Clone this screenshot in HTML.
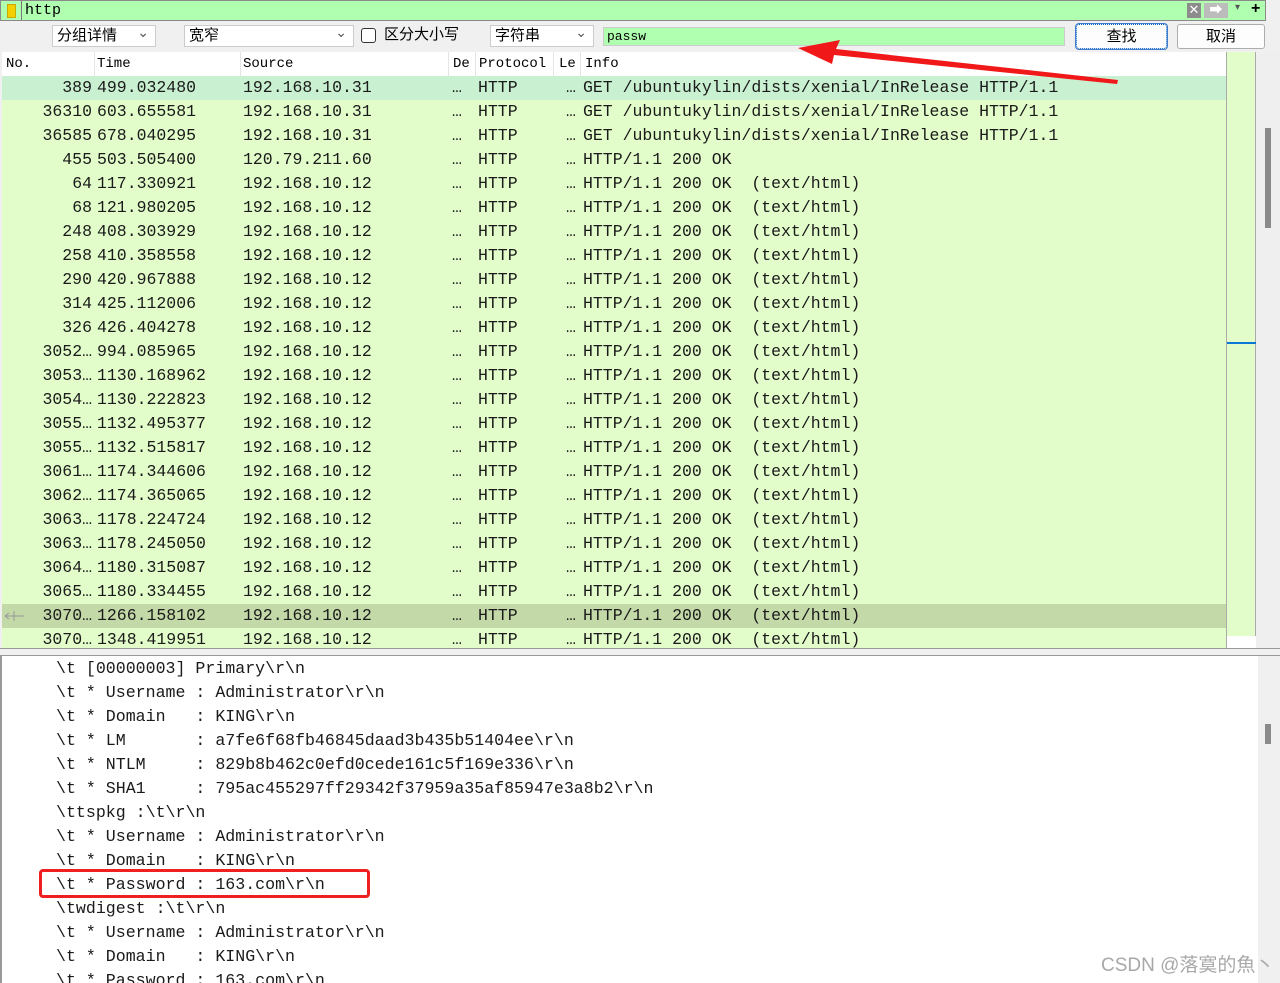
<!DOCTYPE html>
<html><head><meta charset="utf-8">
<style>
*{margin:0;padding:0;box-sizing:border-box}
body{width:1280px;height:983px;overflow:hidden;background:#f0f0f0;font-family:"Liberation Sans","Noto Sans CJK SC",sans-serif;position:relative}
.abs{position:absolute}
.mono{font-family:"Liberation Mono","DejaVu Sans Mono",monospace}
#filter{left:0;top:0;width:1266px;height:21px;background:#b0ffb0;border:1px solid #8a8a8a}
#tb{left:0;top:21px;width:1280px;height:30px;background:#f0f0f0}
.sel{background:#fff;border:1px solid #ccc;height:22px;top:25px;font-size:15px;line-height:20px;padding-left:4px;color:#000}
.sel:after{content:"⌄";position:absolute;right:6px;top:-4px;font-size:14px;color:#555}
.btn{top:24px;height:25px;background:#fdfdfd;border:1px solid #adadad;border-radius:3px;text-align:center;font-size:15px;line-height:23px}
#tbl{left:2px;top:52px;width:1224px;height:596px;background:#e2fdca;overflow:hidden;font-size:16.5px}
#hdr{height:24px;background:#fff;font-size:14px;position:relative}
#hdr span{position:absolute;top:4px}
.row{height:24px;position:relative;line-height:24px;color:#1a1a1a}
.row span{position:absolute;white-space:pre}
#mini{left:1226px;top:52px;width:30px;height:596px;background:#e2fdca;border-left:1px solid #aaa;border-right:1px solid #aaa}
#sb1{left:1257px;top:52px;width:23px;height:596px;background:#efefef}
#det{left:2px;top:656px;width:1256px;height:327px;background:#fff;font-size:16.6px;color:#1a1a1a;overflow:hidden}
#det div{position:absolute;left:54px;white-space:pre;line-height:24px}
</style></head><body>
<div id="filter" class="abs">
  <div class="abs" style="left:6px;top:3px;width:9px;height:14px;background:#f5d000;border:1px solid #c9a800"></div>
  <div class="abs" style="left:20px;top:0;width:1px;height:19px;background:#777"></div>
  <div class="abs mono" style="left:24px;top:1px;font-size:15px">http</div>
  <div class="abs" style="left:1186px;top:2px;width:14px;height:15px;background:#8c8c8c;color:#fff;font-size:13px;line-height:14px;text-align:center">✕</div>
  <div class="abs" style="left:1203px;top:2px;width:24px;height:15px;background:#bcbcbc;color:#fff;font-size:13px;line-height:14px;text-align:center">➡</div>
  <div class="abs" style="left:1234px;top:1px;font-size:10px;color:#555">▾</div>
</div>
<div class="abs" style="left:1251px;top:0;font-size:16px;font-weight:bold">+</div>
<div id="tb" class="abs"></div>
<div class="abs sel" style="left:52px;width:104px">分组详情</div>
<div class="abs sel" style="left:184px;width:170px">宽窄</div>
<div class="abs" style="left:361px;top:28px;width:15px;height:15px;border:1px solid #333;border-radius:3px;background:#fff"></div>
<div class="abs" style="left:384px;top:25px;font-size:15px;line-height:20px">区分大小写</div>
<div class="abs sel" style="left:490px;width:104px">字符串</div>
<div class="abs mono" style="left:603px;top:27px;width:462px;height:19px;background:#b0ffb0;border:1px solid #ccc;font-size:13px;line-height:17px;padding-left:3px">passw</div>
<div class="abs btn" style="left:1076px;width:91px;border:1px dotted #0060c0;outline:1px solid #3d7bd0">查找</div>
<div class="abs btn" style="left:1177px;width:88px">取消</div>

<div id="tbl" class="abs mono">
  <div id="hdr">
    <span style="left:4px">No.</span><span style="left:95px">Time</span><span style="left:241px">Source</span><span style="left:451px">De</span><span style="left:477px">Protocol</span><span style="left:557px">Le</span><span style="left:583px">Info</span>
    <div class="abs" style="left:92px;top:0;width:1px;height:24px;background:#e5e5e5"></div>
    <div class="abs" style="left:238px;top:0;width:1px;height:24px;background:#e5e5e5"></div>
    <div class="abs" style="left:446px;top:0;width:1px;height:24px;background:#e5e5e5"></div>
    <div class="abs" style="left:473px;top:0;width:1px;height:24px;background:#e5e5e5"></div>
    <div class="abs" style="left:551px;top:0;width:1px;height:24px;background:#e5e5e5"></div>
    <div class="abs" style="left:578px;top:0;width:1px;height:24px;background:#e5e5e5"></div>
  </div>
  <div id="rows"></div>
</div>
<div id="mini" class="abs"><div class="abs" style="left:0;top:290px;width:29px;height:2px;background:#0a78d4"></div><div class="abs" style="left:0;top:584px;width:29px;height:12px;background:#fff"></div></div>
<div id="sb1" class="abs"><div class="abs" style="left:8px;top:76px;width:6px;height:100px;background:#8a8a8a"></div></div>
<div class="abs" style="left:0;top:648px;width:1280px;height:8px;background:#f0f0f0;border-top:1px solid #999;border-bottom:1px solid #999"></div>
<div class="abs" style="left:0;top:656px;width:2px;height:327px;background:#999"></div>
<div id="det" class="abs mono">
  <div style="top:1px">\t [00000003] Primary\r\n</div>
  <div style="top:25px">\t * Username : Administrator\r\n</div>
  <div style="top:49px">\t * Domain   : KING\r\n</div>
  <div style="top:73px">\t * LM       : a7fe6f68fb46845daad3b435b51404ee\r\n</div>
  <div style="top:97px">\t * NTLM     : 829b8b462c0efd0cede161c5f169e336\r\n</div>
  <div style="top:121px">\t * SHA1     : 795ac455297ff29342f37959a35af85947e3a8b2\r\n</div>
  <div style="top:145px">\ttspkg :\t\r\n</div>
  <div style="top:169px">\t * Username : Administrator\r\n</div>
  <div style="top:193px">\t * Domain   : KING\r\n</div>
  <div style="top:217px">\t * Password : 163.com\r\n</div>
  <div style="top:241px">\twdigest :\t\r\n</div>
  <div style="top:265px">\t * Username : Administrator\r\n</div>
  <div style="top:289px">\t * Domain   : KING\r\n</div>
  <div style="top:313px">\t * Password : 163.com\r\n</div>
</div>
<div class="abs" style="left:39px;top:869px;width:331px;height:29px;border:3px solid #f02020;border-radius:4px"></div>
<div class="abs" style="left:1258px;top:656px;width:22px;height:327px;background:#f0f0f0"><div class="abs" style="left:7px;top:68px;width:6px;height:20px;background:#8a8a8a"></div></div>
<div class="abs" style="left:1101px;top:950px;font-size:19px;color:#a8a8a8;font-family:'Liberation Sans','Noto Sans CJK SC',sans-serif">CSDN @落寞的魚丶</div>
<svg class="abs" style="left:0;top:0" width="1280" height="983"><polygon points="798,48 840,40 836,49 1118,80 1117,84 834,55 832,64" fill="#f01818"/></svg>
<svg class="abs" style="left:2px;top:608px" width="24" height="16"><path d="M3 8H22M12 3V13M3 8L7 5M3 8L7 11" stroke="#999" stroke-width="1" fill="none"/></svg>
<script>
var R=[["389","499.032480","192.168.10.31","GET /ubuntukylin/dists/xenial/InRelease HTTP/1.1"],
["36310","603.655581","192.168.10.31","GET /ubuntukylin/dists/xenial/InRelease HTTP/1.1"],
["36585","678.040295","192.168.10.31","GET /ubuntukylin/dists/xenial/InRelease HTTP/1.1"],
["455","503.505400","120.79.211.60","HTTP/1.1 200 OK"],
["64","117.330921","192.168.10.12",""],["68","121.980205","192.168.10.12",""],["248","408.303929","192.168.10.12",""],["258","410.358558","192.168.10.12",""],["290","420.967888","192.168.10.12",""],["314","425.112006","192.168.10.12",""],["326","426.404278","192.168.10.12",""],
["3052…","994.085965","192.168.10.12",""],["3053…","1130.168962","192.168.10.12",""],["3054…","1130.222823","192.168.10.12",""],["3055…","1132.495377","192.168.10.12",""],["3055…","1132.515817","192.168.10.12",""],["3061…","1174.344606","192.168.10.12",""],["3062…","1174.365065","192.168.10.12",""],["3063…","1178.224724","192.168.10.12",""],["3063…","1178.245050","192.168.10.12",""],["3064…","1180.315087","192.168.10.12",""],["3065…","1180.334455","192.168.10.12",""],["3070…","1266.158102","192.168.10.12",""],["3070…","1348.419951","192.168.10.12",""]];
var h="";R.forEach(function(r,i){var bg=i==0?"#c9f0d0":(i==22?"#c3d9a8":"#e2fdca");var info=r[3]||"HTTP/1.1 200 OK  (text/html)";
h+='<div class="row" style="background:'+bg+'"><span style="right:1134px">'+r[0]+'</span><span style="left:95px">'+r[1]+'</span><span style="left:241px">'+r[2]+'</span><span style="left:450px">…</span><span style="left:476px">HTTP</span><span style="left:564px">…</span><span style="left:581px">'+info+'</span></div>';});
document.getElementById("rows").innerHTML=h;
</script>
</body></html>
